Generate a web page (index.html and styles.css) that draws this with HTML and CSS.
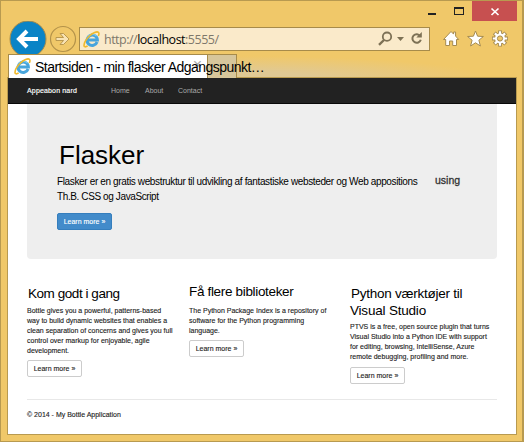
FILE: index.html
```html
<!DOCTYPE html>
<html lang="da">
<head>
<meta charset="utf-8">
<title>Startsiden - min flasker</title>
<link rel="stylesheet" href="styles.css">
</head>
<body>
<svg width="0" height="0" class="defs">
  <symbol id="ie" viewBox="0 0 17 17">
    <path d="M14.1 11A5.2 5.2 0 1 1 14.4 9H5" fill="none" stroke="#48a5dc" stroke-width="3"/>
    <path d="M4.6 5.8A5.6 5.6 0 0 1 13.6 5.2" fill="none" stroke="#7accf0" stroke-width="1.1"/>
    <path d="M4.6 14.9C2.6 16.4.9 16.1 1 14.2C1.1 11.8 3.2 8.2 6.2 5.2C9.8 1.6 14 .1 15.4 1.3C16.2 2.1 16 3.6 15.3 5" fill="none" stroke="#f0b92c" stroke-width="1.6"/>
  </symbol>
</svg>
<div class="window">
  <header class="chrome">
    <div class="captions">
      <svg class="min" width="8" height="20"><path d="M0 12h8v2H0z" fill="#222"/></svg>
      <svg class="max" width="10" height="20"><path fill-rule="evenodd" d="M0 6h10v8H0zM1 8v5h8V8z" fill="#222"/></svg>
      <div class="close"><svg width="45" height="20"><path d="M19.5 7.5l7 6.5M26.5 7.5l-7 6.5" stroke="#fff" stroke-width="1.7"/></svg></div>
    </div>
    <div class="toolbar">
      <svg class="back" width="38" height="38"><circle cx="19" cy="19" r="18" fill="#0a84c6" stroke="#a78b4a"/><path d="M29 19H10M18 11l-8 8 8 8" fill="none" stroke="#fff" stroke-width="4"/></svg>
      <svg class="forward" width="28" height="28"><circle cx="14" cy="14" r="12.5" fill="none" stroke="#b3924a" stroke-width="1.2"/><path d="M7 12.5h7.5l-3.5-4h3.5l5.5 5.5-5.5 5.5H11l3.5-4H7z" fill="#f8e3b4" stroke="#b3924a" stroke-width=".9"/></svg>
      <div class="address">
        <svg class="ie" width="17" height="17"><use href="#ie"/></svg>
        <span class="url">http://<b>localhost</b>:5555/</span>
        <svg width="48" height="18" class="tools"><circle cx="9" cy="6.7" r="4.2" fill="none" stroke="#7d7155" stroke-width="1.8"/><path d="M6 10L1 14.8" stroke="#7d7155" stroke-width="2.4"/><path d="M19 7h7l-3.5 4z" fill="#7d7155"/><path d="M42.2 6A4.3 4.3 0 1 0 42.8 9.8" fill="none" stroke="#7d7155" stroke-width="2"/><path d="M43.8 2v5.5h-5.5z" fill="#7d7155"/></svg>
      </div>
      <svg class="actions" width="66" height="18">
        <g fill="#fff" stroke="#a58b50" stroke-width="1">
          <path d="M8 1.5l2.6 2.6V2h2v4.1L15.7 9.5H13.5v6H9.7v-4.5H6.5v4.5H2.7v-6H.5z"/>
          <path d="M32.5 1l2.1 5.2 5.8.3-4.5 3.7 1.5 5.8-4.9-3.2-4.9 3.2 1.5-5.8-4.5-3.7 5.8-.3z"/>
        </g>
        <g transform="translate(57 8.5)">
          <g stroke="#a58b50" stroke-width="4"><path d="M0-8V8M-8 0H8M-5.7-5.7L5.7 5.7M5.7-5.7L-5.7 5.7"/></g>
          <circle r="5.9" fill="#a58b50"/>
          <g stroke="#fff" stroke-width="2.2"><path d="M0-7.2V7.2M-7.2 0H7.2M-5.1-5.1L5.1 5.1M5.1-5.1L-5.1 5.1"/></g>
          <circle r="5" fill="#fff"/>
          <circle r="2.6" fill="#f0c869" stroke="#a58b50"/>
        </g>
      </svg>
    </div>
    <div class="tabs">
      <div class="tab"><svg class="ie" width="17" height="17"><use href="#ie"/></svg><span class="x">×</span><span class="tabtext">Startsiden - min flasker Adgangspunkt…</span></div>
      <div class="newtab"></div>
    </div>
  </header>
  <main class="page">
    <nav class="navbar"><span class="brand">Appeabon nard</span><span class="home">Home</span><span class="about">About</span><span>Contact</span></nav>
    <section class="jumbo">
      <div class="intro">
        <h1>Flasker</h1>
        <p><span class="lead1">Flasker er en gratis webstruktur til udvikling af fantastiske websteder og Web appositions</span><br><span class="lead2">Th.B. CSS og JavaScript</span></p>
        <a class="btn primary">Learn more »</a>
      </div>
      <span class="using">using</span>
    </section>
    <section class="columns">
      <article class="c1">
        <h2>Kom godt i gang</h2>
        <p>Bottle gives you a powerful, patterns-based<br>way to build dynamic websites that enables a<br>clean separation of concerns and gives you full<br>control over markup for enjoyable, agile<br>development.</p>
        <a class="btn">Learn more »</a>
      </article>
      <article class="c2">
        <h2>Få flere biblioteker</h2>
        <p>The Python Package Index is a repository of<br>software for the Python programming<br>language.</p>
        <a class="btn">Learn more »</a>
      </article>
      <article class="c3">
        <h2>Python værktøjer til<br><span class="vs">Visual Studio</span></h2>
        <p>PTVS is a free, open source plugin that turns<br>Visual Studio into a Python IDE with support<br>for editing, browsing, IntelliSense, Azure<br>remote debugging, profiling and more.</p>
        <a class="btn">Learn more »</a>
      </article>
    </section>
    <footer>© 2014 - My Bottle Application</footer>
  </main>
</div>
</body>
</html>
```

FILE: styles.css
```css
* { box-sizing: border-box; }
body { margin: 0; font-family: "Liberation Sans", Arial, sans-serif; color: #000; }
svg { display: block; flex: none; }
.defs { position: absolute; }
.window { width: 524px; height: 442px; border: 1px solid #b89a50; border-right-width: 2px; background: #f0c869; padding: 0 6px 7px; overflow: hidden; white-space: nowrap; }
.chrome { height: 76px; }
.captions { height: 20px; display: flex; justify-content: flex-end; margin-right: -1px; }
.max { margin: 0 8px 0 18px; }
.close { background: #c75050; width: 45px; }
.toolbar { height: 33px; display: flex; overflow: hidden; }
.back { margin: -1px 0 0 2px; }
.forward { margin: 4px 0 0 2px; }
.address { width: 351px; height: 24px; margin: 6px 0 0 2px; border: 1px solid #a78b4a; background: #faeaca; display: flex; align-items: center; padding-left: 3px; }
.url { font: 12.5px/20px "Open Sans", sans-serif; color: #7e786a; margin: 1px 0 0 4px; letter-spacing: -.5px; flex: 1; }
.url b { font-weight: 400; color: #000; }
.tools { margin-right: 3px; }
.actions { margin: 9px 0 0 13px; }
.tabs { height: 24px; display: flex; margin: 0 -1px 0 1px; background: radial-gradient(ellipse 250px 22px at 230px 24px, #e0c994 30%, transparent); }
.tab { width: 200px; height: 24px; border: 1px solid #a78b4a; border-bottom: 0; background: #fff; display: flex; align-items: center; padding-left: 5px; position: relative; }
.tabtext { font-size: 14px; margin: 0 0 0 4px; position: relative; letter-spacing: -.54px; }
.x { position: absolute; right: 5px; top: 1px; font-size: 16px; color: #aaa; }
.newtab { width: 29px; border: 1px solid #a78b4a; border-left: 0; border-bottom: 0; background: #d7c69b; }
.page { width: 510px; height: 358px; border: 1px solid #b89a50; background: #fff; }
.navbar { height: 26px; background: #222; border-bottom: 1px solid #080808; display: flex; align-items: center; font-size: 7px; color: #aaa; padding-left: 19px; }
.brand { width: 84px; color: #fff; letter-spacing: .16px; -webkit-text-stroke: .15px #fff; }
.home { width: 34px; }
.about { width: 33px; }
.jumbo { margin: 0 19px; height: 155px; background: #eee; border-radius: 0 0 4px 4px; padding: 36px 0 0 30px; display: flex; }
.intro { width: 378px; }
h1 { font-size: 26px; line-height: 30px; font-weight: 400; margin: 0 0 0 2px; }
.jumbo p { font-size: 10px; line-height: 15px; margin: 4px 0 9px; }
.lead1 { letter-spacing: -.36px; }
.lead2 { letter-spacing: -.39px; }
.using { font-size: 10.5px; color: #333; margin-top: 33px; line-height: 14px; -webkit-text-stroke: .3px #333; }
.btn { display: block; width: 55px; height: 17px; border: 1px solid #ccc; border-radius: 2px; font-size: 7px; line-height: 15px; text-align: center; color: #222; background: #fff; -webkit-text-stroke: .12px; }
.primary { background: #428bca; border-color: #357ebd; color: #fff; }
.columns { display: grid; grid-template-columns: 162px 161px 1fr; margin: 25px 19px 0; height: 115px; }
h2 { font-size: 13.5px; line-height: 17px; font-weight: 400; margin: 0 0 4px 1px; letter-spacing: -.25px; }
.columns p { font-size: 7px; line-height: 10px; margin: 0 0 4px; color: #222; -webkit-text-stroke: .12px; }
.c1 { padding-top: 1px; }
.c1 h2 { letter-spacing: -.45px; }
.c2 h2 { margin: -1px 0 6px; letter-spacing: -.33px; }
.c3 { padding-top: 1px; }
.c3 h2 { margin-bottom: 3px; }
.vs { margin-left: -1px; letter-spacing: -.2px; }
.c3 p { margin-bottom: 5px; }
footer { margin: 0 19px; border-top: 1px solid #e8e8e8; font-size: 7px; line-height: 10px; padding-top: 10px; color: #222; -webkit-text-stroke: .12px; }
```
